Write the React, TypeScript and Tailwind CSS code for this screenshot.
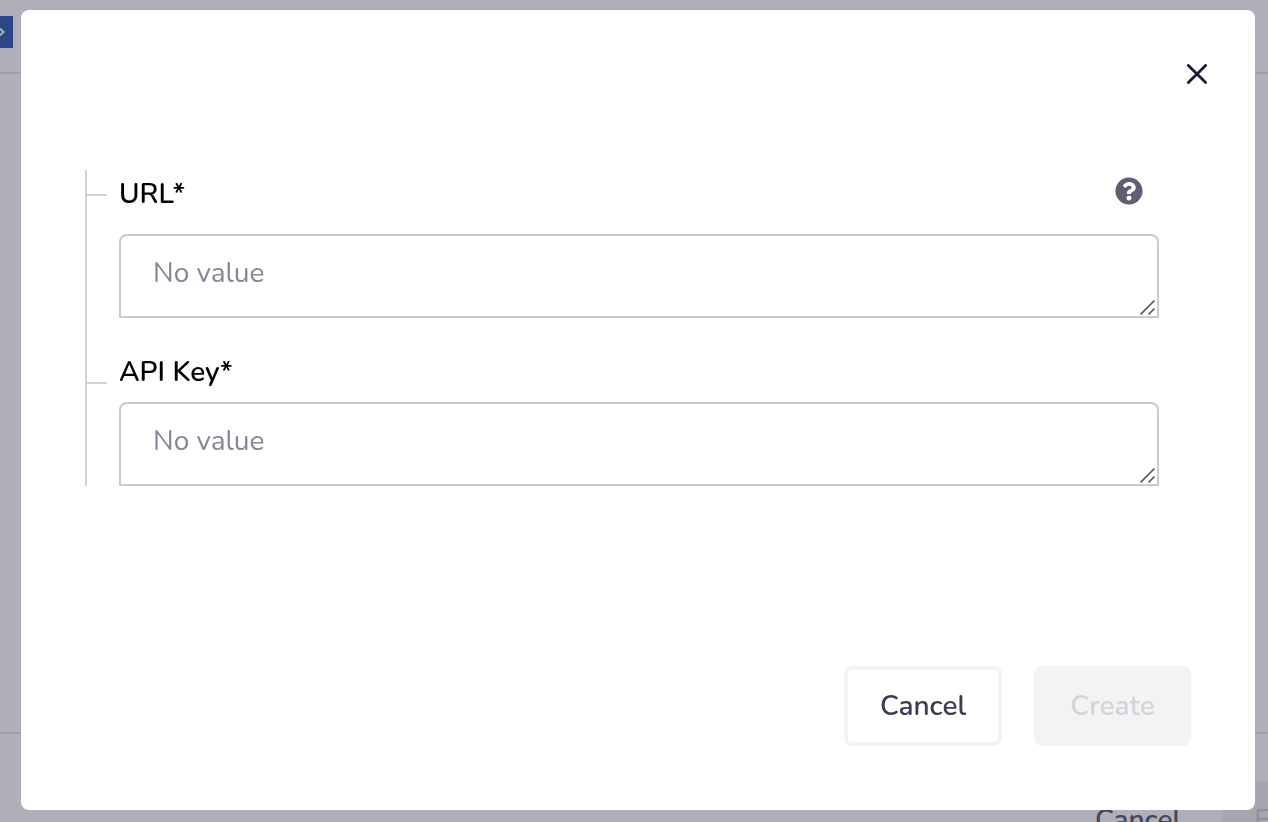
import { FaQuestionCircle } from "react-icons/fa"

function ResizeGrip() {
  return (
    <svg
      viewBox="0 0 16 16"
      className="pointer-events-none absolute right-[3px] bottom-[2px] h-4 w-4"
      fill="none"
      stroke="#555555"
      strokeWidth="1.6"
      aria-hidden="true"
    >
      <path d="M.5 14.5 14.5.5M8.5 14.5l6-6" />
    </svg>
  )
}

function ValueField({ id }: { id: string }) {
  return (
    <div className="relative">
      <textarea
        id={id}
        rows={1}
        placeholder="No value"
        className="block h-21 w-full resize-none overflow-hidden rounded-t-lg border-2 border-[#cacaca] bg-white px-8 py-[17px] text-[28px] leading-10 text-[#1a1a38] outline-none placeholder:text-[#86869a] focus:border-[#86869a]"
      />
      <ResizeGrip />
    </div>
  )
}

function PageBehind() {
  return (
    <div className="flex h-screen flex-col overflow-hidden bg-[#afafb9]" aria-hidden="true">
      <header className="border-b-2 border-[#9f9faa] py-4">
        <div className="flex h-10 items-start">
          <div className="flex h-8 w-[13px] items-center bg-[#2d4687]">
            <svg viewBox="0 0 6 10" className="h-2.5 w-1.5" fill="none" stroke="#afafb9" strokeWidth="2">
              <path d="M0 1.5 3.5 5 0 8.5" />
            </svg>
          </div>
        </div>
      </header>
      <main className="flex-1" />
      <footer className="flex h-[90px] shrink-0 items-start justify-end border-t-2 border-[#9f9faa] pt-12 text-[28px] leading-10 font-semibold">
        <span className="px-[41px] py-[18px] text-[#45455c]">Cancel</span>
        <span className="w-[46px] overflow-hidden bg-[#a6a6b0] py-[18px] pl-8 text-[#92929f]">Edit</span>
      </footer>
    </div>
  )
}

export default function App() {
  return (
    <div className="font-['Nunito','Lato',sans-serif]">
      <PageBehind />

      <div className="fixed inset-0 pt-2.5 pr-[13px] pb-3 pl-[21px]">
        <div role="dialog" aria-modal="true" aria-label="Create" className="flex h-full flex-col rounded-lg bg-white">
          <div className="flex justify-end pt-12 pr-[42px]">
            <button type="button" aria-label="Close" className="flex h-8 w-8 items-center justify-center">
              <svg viewBox="0 0 20 20" className="h-5 w-5" fill="none" stroke="#1a1a38" strokeWidth="2.8" strokeLinecap="round">
                <path d="m1.4 1.4 17.2 17.2M18.6 1.4 1.4 18.6" />
              </svg>
            </button>
          </div>

          <form className="flex flex-1 flex-col">
            <div className="mt-20 mr-24 ml-16 flex flex-col gap-8 border-l-2 border-[#d0d0d0]">
              <div className="flex gap-3">
                <div className="mt-6 h-0.5 w-5 bg-[#d0d0d0]" />
                <div className="flex-1">
                  <div className="mb-4 flex h-12 items-center justify-between pr-4">
                    <label htmlFor="url" className="text-[28px] leading-10 font-semibold text-black">
                      URL*
                    </label>
                    <button type="button" aria-label="Help" className="mb-1.5">
                      <FaQuestionCircle className="h-7 w-7 text-[#5f5e73]" />
                    </button>
                  </div>
                  <ValueField id="url" />
                </div>
              </div>

              <div className="flex gap-3">
                <div className="mt-8 h-0.5 w-5 bg-[#d0d0d0]" />
                <div className="flex-1">
                  <div className="mb-2 flex h-11 items-center">
                    <label htmlFor="api-key" className="text-[28px] leading-10 font-semibold text-black">
                      API Key*
                    </label>
                  </div>
                  <ValueField id="api-key" />
                </div>
              </div>
            </div>

            <div className="mt-auto flex justify-end gap-8 px-16 pb-16 text-[28px] leading-10 font-semibold">
              <button
                type="button"
                className="h-20 min-w-[158px] rounded-lg border-4 border-[#f3f3f3] bg-white px-8 text-[#3c3c54]"
              >
                Cancel
              </button>
              <button type="submit" disabled className="h-20 min-w-[157px] rounded-lg bg-[#f3f3f3] px-8 text-[#d3d3dc]">
                Create
              </button>
            </div>
          </form>
        </div>
      </div>
    </div>
  )
}
